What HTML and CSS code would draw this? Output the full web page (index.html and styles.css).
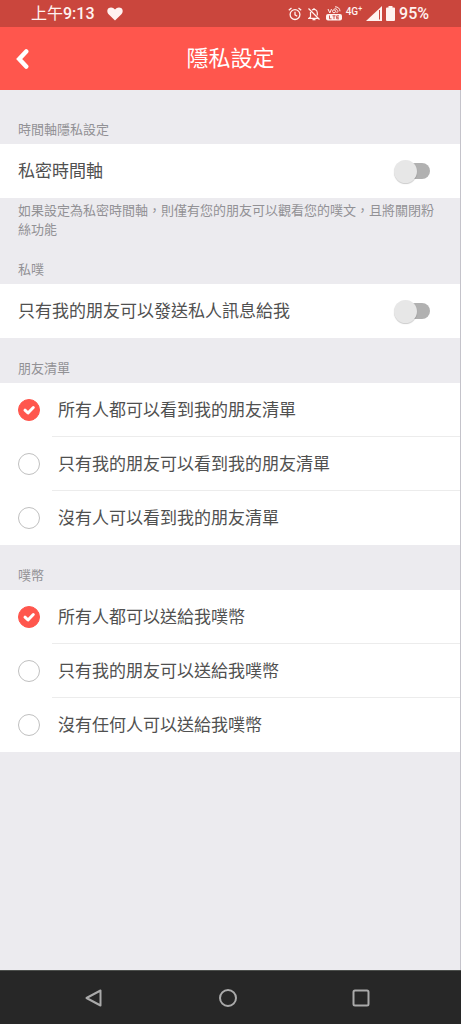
FILE: index.html
```html
<!DOCTYPE html>
<html lang="zh-Hant">
<head>
<meta charset="utf-8">
<meta name="viewport" content="width=device-width, initial-scale=1">
<title>隱私設定</title>
<link rel="stylesheet" href="styles.css">
</head>
<body>
<div class="screen">
  <div class="status">
    <span class="clock">上午<span class="digits">9:13</span></span>
    <svg class="heart" width="16" height="14" viewBox="0 0 16 14" fill="currentColor"><path d="M8 13.5 1.6 7.3C-.2 5.400 0 2.600 1.500 1.300 3.300-.2 6.300.1 8 2.600 9.700.1 12.700-.2 14.500 1.300 16 2.600 16.200 5.400 14.400 7.300Z"/></svg>
    <div class="indicators">
      <svg width="14" height="14" viewBox="0 0 14 14" fill="none" stroke="currentColor" stroke-width="1.300"><circle cx="7" cy="7.600" r="4.900"/><path d="M7 4.800v3l2.200 1.400M.8 3.300 3.500 1M13.200 3.300 10.500 1"/></svg>
      <svg class="bell" width="12" height="14" viewBox="0 0 12 14" fill="none" stroke="currentColor" stroke-width="1.200"><path d="M2.500 5v5L1 11.300h8.700M4 2.900C6.300 1.400 9.300 3 9.300 6v2.600M.5 1.500l11 11M6 1v1.500"/><path d="M4.500 12.500h3" stroke-width="1.600"/></svg>
      <svg width="16" height="15" viewBox="0 0 16 15" fill="none" stroke="currentColor"><path d="M2 3l1.800 4L5.500 3M11 7V5.500"/><circle cx="8" cy="5.300" r="1.500"/><path d="M8.500 2.700c2 0 3.300 1 3.500 3M9 .8c3 0 4.800 1.500 5 4.500"/><rect x="0" y="8" width="16" height="6.500" rx="2" fill="currentColor" stroke="none"/><path d="M3.500 9.500v3.300h2M6.500 9.800h3M8 9.800v3.300M13 9.800h-2.300v3H13M10.700 11.300h2" stroke="#ca463d" stroke-width=".9"/></svg>
      <span class="network">4G<sup>+</sup></span>
      <svg width="16" height="15" viewBox="0 0 16 15"><path d="M16 0v15H0Z" fill="currentColor"/><path d="M13.500 4v9.500" stroke="#ca463d" stroke-width="1"/></svg>
      <svg width="9" height="15" viewBox="0 0 9 15" fill="currentColor"><path d="M2.500 0h4v1.500H8q1 0 1 1V14q0 1-1 1H1q-1 0-1-1V2.500q0-1 1-1h1.500Z"/></svg>
      <span class="digits">95%</span>
    </div>
  </div>

  <header class="bar">
    <button class="back" type="button" aria-label="返回">
      <svg width="14" height="22" viewBox="0 0 14 22" fill="none" stroke="currentColor" stroke-width="4.500" stroke-linecap="round" stroke-linejoin="miter"><path d="M11.200 3.500 4.200 11 11.200 18.500"/></svg>
    </button>
    <h1 class="title">隱私設定</h1>
  </header>

  <main class="content">
    <section>
      <h2 class="heading heading-first">時間軸隱私設定</h2>
      <label class="row">私密時間軸<input class="switch" type="checkbox" role="switch"></label>
      <p class="note">如果設定為私密時間軸，則僅有您的朋友可以觀看您的噗文，且將關閉粉絲功能</p>
    </section>

    <section>
      <h2 class="heading">私噗</h2>
      <label class="row">只有我的朋友可以發送私人訊息給我<input class="switch" type="checkbox" role="switch"></label>
    </section>

    <section>
      <h2 class="heading">朋友清單</h2>
      <div class="options">
        <label class="option"><span class="mark"><input class="radio" type="radio" name="friends" checked><svg class="tick" viewBox="0 0 22 22"><path d="M7 11.200 10 14 15.300 8.500"/></svg></span><span class="text">所有人都可以看到我的朋友清單</span></label>
        <label class="option"><span class="mark"><input class="radio" type="radio" name="friends"><svg class="tick" viewBox="0 0 22 22"><path d="M7 11.200 10 14 15.300 8.500"/></svg></span><span class="text">只有我的朋友可以看到我的朋友清單</span></label>
        <label class="option"><span class="mark"><input class="radio" type="radio" name="friends"><svg class="tick" viewBox="0 0 22 22"><path d="M7 11.200 10 14 15.300 8.500"/></svg></span><span class="text">沒有人可以看到我的朋友清單</span></label>
      </div>
    </section>

    <section>
      <h2 class="heading">噗幣</h2>
      <div class="options">
        <label class="option"><span class="mark"><input class="radio" type="radio" name="coins" checked><svg class="tick" viewBox="0 0 22 22"><path d="M7 11.200 10 14 15.300 8.500"/></svg></span><span class="text">所有人都可以送給我噗幣</span></label>
        <label class="option"><span class="mark"><input class="radio" type="radio" name="coins"><svg class="tick" viewBox="0 0 22 22"><path d="M7 11.200 10 14 15.300 8.500"/></svg></span><span class="text">只有我的朋友可以送給我噗幣</span></label>
        <label class="option"><span class="mark"><input class="radio" type="radio" name="coins"><svg class="tick" viewBox="0 0 22 22"><path d="M7 11.200 10 14 15.300 8.500"/></svg></span><span class="text">沒有任何人可以送給我噗幣</span></label>
      </div>
    </section>
  </main>

  <nav class="nav">
    <button class="key" type="button" aria-label="上一頁"><svg width="20" height="20" viewBox="0 0 20 20"><path d="M16.500 2.500v15L2.500 10Z"/></svg></button>
    <button class="key" type="button" aria-label="主畫面"><svg width="20" height="20" viewBox="0 0 20 20"><circle cx="10" cy="10" r="8"/></svg></button>
    <button class="key" type="button" aria-label="最近使用"><svg width="20" height="20" viewBox="0 0 20 20"><rect x="2.500" y="2.500" width="15" height="15" rx="1.500"/></svg></button>
  </nav>
</div>
</body>
</html>
```

FILE: styles.css
```css
* {
  box-sizing: border-box;
}

body {
  margin: 0;
  font-family: Roboto, "Noto Sans CJK TC", sans-serif;
  background: #ecebef;
  color: #505050;
}

button {
  margin: 0;
  padding: 0;
  border: 0;
  background: none;
  color: inherit;
}

svg {
  display: block;
  flex: none;
}

.screen {
  display: flex;
  flex-direction: column;
  min-height: 100vh;
}

.status {
  display: flex;
  align-items: center;
  height: 27px;
  padding: 0 32px 0 31px;
  background: #ca463d;
  color: #fff2f0;
  font-size: 16px;
  line-height: 27px;
}

.digits {
  font-weight: 500;
}

.heart {
  margin-left: 12px;
}

.indicators {
  display: flex;
  align-items: center;
  gap: 4px;
  margin-left: auto;
}

.bell {
  margin: 0 2px;
}

.network {
  padding-bottom: 4px;
  font-size: 10px;
  line-height: 14px;
  font-weight: 500;
}

.network sup {
  font-size: 7px;
  line-height: 1;
}

.bar {
  display: grid;
  grid-template-columns: 45px 1fr 45px;
  align-items: center;
  height: 63px;
  background: #ff564d;
  color: #fff;
}

.back {
  display: flex;
  align-items: center;
  height: 63px;
  padding-left: 15px;
}

.title {
  margin: 0;
  font-size: 22px;
  line-height: 32px;
  font-weight: 400;
  text-align: center;
}

.content {
  flex: 1;
  border-right: 1px solid #c4c3ca;
}

.heading {
  margin: 0;
  padding: 21px 18px 4px;
  color: #929195;
  font-size: 13px;
  line-height: 20px;
  font-weight: 400;
}

.heading-first {
  padding-top: 30px;
}

.row {
  display: flex;
  align-items: center;
  justify-content: space-between;
  min-height: 54px;
  padding: 0 30px 0 18px;
  background: #fff;
  font-size: 17px;
  line-height: 24px;
}

.note {
  margin: 0;
  padding: 3px 18px 0;
  color: #929195;
  font-size: 13px;
  line-height: 19px;
}

.switch {
  appearance: none;
  display: grid;
  grid-template-columns: 1fr;
  align-items: center;
  flex: none;
  width: 36px;
  height: 24px;
  margin: 0;
}

.switch::before,
.switch::after {
  content: "";
  grid-area: 1 / 1;
}

.switch::before {
  justify-self: end;
  width: 32px;
  height: 16px;
  border-radius: 8px;
  background: #b1b1b1;
}

.switch::after {
  justify-self: start;
  width: 23px;
  height: 23px;
  border-radius: 50%;
  background: #e7e7e7;
  box-shadow: 0 1px 1px #0003;
}

.switch:checked::after {
  justify-self: end;
}

.options {
  background: #fff;
}

.option {
  display: flex;
  align-items: center;
  padding-left: 18px;
}

.mark {
  display: grid;
  flex: none;
  width: 22px;
  height: 22px;
  margin-right: 12px;
}

.radio,
.tick {
  grid-area: 1 / 1;
  width: 22px;
  height: 22px;
  margin: 0;
}

.radio {
  appearance: none;
  border: 1px solid #c0c0c0;
  border-radius: 50%;
  background: #fff;
}

.radio:checked {
  border-color: #ff564d;
  background: #ff564d;
}

.tick {
  visibility: hidden;
  z-index: 1;
  fill: none;
  stroke: #fff;
  stroke-width: 3;
  stroke-linecap: round;
  stroke-linejoin: round;
  pointer-events: none;
}

.radio:checked + .tick {
  visibility: visible;
}

.text {
  flex: 1;
  padding: 15px 6px 14px;
  font-size: 17px;
  line-height: 24px;
  border-bottom: 1px solid #ececec;
}

.option:last-child .text {
  border-bottom-color: transparent;
}

.nav {
  display: flex;
  align-items: center;
  justify-content: space-between;
  height: 54px;
  padding: 0 90px 0 84px;
  background: #272727;
  border-top: 1px solid #4c4f4c;
}

.key svg {
  fill: none;
  stroke: #aaa;
  stroke-width: 2;
  stroke-linejoin: round;
}
```
